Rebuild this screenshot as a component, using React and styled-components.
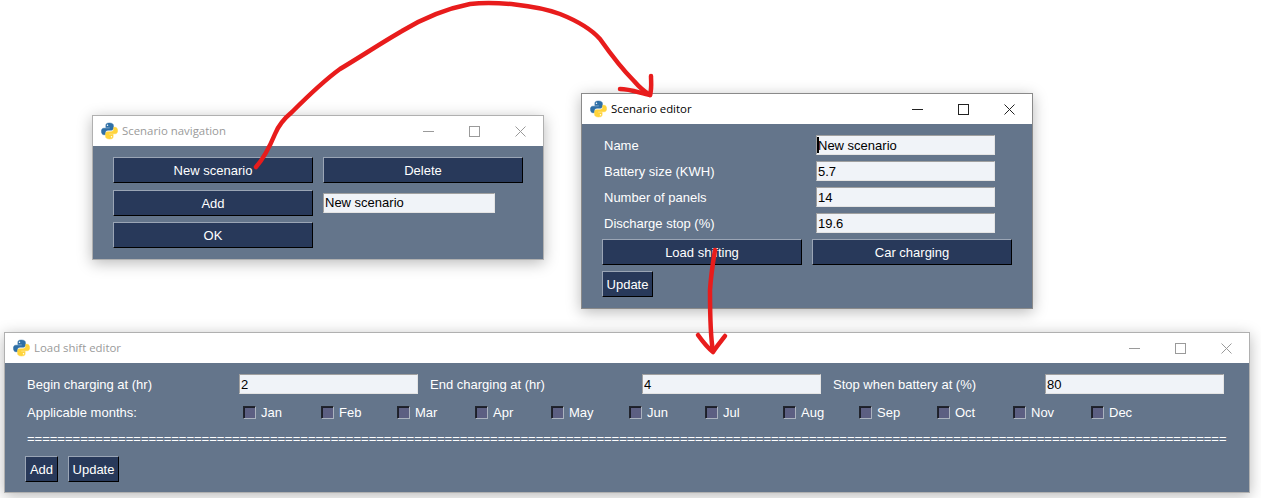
import React from "react"
import styled, { createGlobalStyle } from "styled-components"

const months = ["Jan", "Feb", "Mar", "Apr", "May", "Jun", "Jul", "Aug", "Sep", "Oct", "Nov", "Dec"]

const GlobalStyle = createGlobalStyle`
    html, body {
        margin: 0;
        padding: 0;
        background: #ffffff;
        overflow: hidden;
    }
`

const Desktop = styled.div`
    position: relative;
    width: 1261px;
    height: 498px;
    background: #ffffff;
    font-family: "Liberation Sans", Arial, sans-serif;
    font-size: 13px;
    color: #ffffff;
`

const Window = styled.div`
    position: absolute;
    left: ${(p) => p.$x}px;
    top: ${(p) => p.$y}px;
    width: ${(p) => p.$w}px;
    height: ${(p) => p.$h}px;
    box-sizing: border-box;
    display: flex;
    flex-direction: column;
    border: 1px solid ${(p) => (p.$active ? "#8a8a8a" : "#b0b0b0")};
    background: #64758b;
    box-shadow: 0 3px 14px rgba(0, 0, 0, 0.28);
`

const TitleBar = styled.div`
    height: 30px;
    flex: none;
    display: flex;
    align-items: center;
    background: #ffffff;
    padding-left: 8px;
`

const Title = styled.span`
    margin: -2px 0 0 4px;
    font-family: "Open Sans", "Noto Sans", sans-serif;
    font-size: 11.4px;
    color: ${(p) => (p.$active ? "#000000" : "#9a9a9a")};
`

const Controls = styled.div`
    margin-left: auto;
    display: flex;
    color: ${(p) => (p.$active ? "#222222" : "#9a9a9a")};
`

const ControlButton = styled.div`
    width: 46px;
    height: 30px;
    display: flex;
    align-items: center;
    justify-content: center;
`

const Body = styled.div`
    flex: 1;
    display: flex;
    flex-direction: column;
`

const NavGrid = styled.div`
    display: grid;
    grid-template-columns: 200px 200px;
    grid-auto-rows: 26px;
    column-gap: 10px;
    row-gap: 6px;
    padding: 11px 0 0 20px;
    & > :nth-child(n + 3) {
        margin-top: 1px;
    }
`

const Button = styled.button`
    box-sizing: border-box;
    height: 26px;
    width: ${(p) => (p.$w ? `${p.$w}px` : "auto")};
    padding: 0;
    background: #28395a;
    color: #ffffff;
    font-family: inherit;
    font-size: 13px;
    border-style: solid;
    border-width: 1px;
    border-color: #9aa5b5 #000000 #000000 #9aa5b5;
`

const Field = styled.input`
    box-sizing: border-box;
    width: ${(p) => p.$w}px;
    height: 20px;
    padding: 0 0 0 1px;
    background: #f0f3f8;
    color: #000000;
    font-family: inherit;
    font-size: 13px;
    border-style: solid;
    border-width: 1px;
    border-color: #a0a0a0 #e4e4e4 #e4e4e4 #a0a0a0;
    outline: none;
`

const FieldCell = styled.div`
    display: flex;
    align-items: center;
`

const CaretWrap = styled.div`
    position: relative;
    display: flex;
`

const Caret = styled.span`
    position: absolute;
    left: 1px;
    top: 2px;
    width: 2px;
    height: 16px;
    background: #000000;
`

const EditorForm = styled.div`
    display: grid;
    grid-template-columns: 212px 179px;
    grid-auto-rows: 20px;
    row-gap: 6px;
    padding: 11px 0 0 22px;
`

const Label = styled.span`
    line-height: 21px;
    white-space: nowrap;
`

const EditorButtons = styled.div`
    display: grid;
    grid-template-columns: 200px 200px;
    column-gap: 10px;
    padding: 6px 0 0 20px;
`

const UpdateRow = styled.div`
    display: flex;
    gap: 10px;
    padding: 6px 0 0 ${(p) => p.$left}px;
`

const ShiftRow = styled.div`
    display: flex;
    box-sizing: border-box;
    height: 31px;
    padding: 11px 0 0 22px;
`

const ShiftCell = styled.div`
    display: flex;
    width: ${(p) => p.$w}px;
    flex: none;
`

const ShiftLabel = styled(Label)`
    width: ${(p) => p.$w}px;
    flex: none;
`

const MonthRow = styled.div`
    display: flex;
    align-items: center;
    height: 20px;
    padding: 8px 0 0 22px;
`

const MonthsLabel = styled(Label)`
    width: 216px;
    flex: none;
`

const Month = styled.label`
    display: flex;
    align-items: center;
    gap: 5px;
    width: ${(p) => (p.$odd ? 76 : 78)}px;
    flex: none;
`

const Check = styled.span`
    box-sizing: border-box;
    width: 13px;
    height: 13px;
    background: #5c5f82;
    border-style: solid;
    border-width: 1px;
    border-color: #22252e #aab2be #aab2be #22252e;
    box-shadow: inset 1px 1px 0 #1c1f2a;
`

const Separator = styled.div`
    width: 1201px;
    margin: 9px 0 0 22px;
    height: 16px;
    line-height: 16px;
    overflow: hidden;
    white-space: nowrap;
`

const ShiftButtons = styled(UpdateRow)`
    padding-top: 9px;
`

const Overlay = styled.svg`
    position: absolute;
    left: 0;
    top: 0;
    pointer-events: none;
`

const PythonIcon = () => (
    <svg width="17" height="18" viewBox="0 0 16 16">
        <path d="M8 .5C5 .5 4.6 1.6 4.6 3v1.8h3.6v.6H2.7C1.2 5.4.4 6.6.4 8.3c0 1.8.8 3.2 2.3 3.2h1.4V9.6c0-1.4 1.2-2.4 2.5-2.4h3.2c1.1 0 1.9-.9 1.9-2V3C11.7 1.4 10.4.5 8 .5z" fill="#2f6fa6" stroke="#2f6fa6" strokeWidth=".5" />
        <path d="M8 15.5c3 0 3.4-1.1 3.4-2.5v-1.8H7.8v-.6h5.5c1.5 0 2.3-1.2 2.3-2.9 0-1.8-.8-3.2-2.3-3.2h-1.4v1.9c0 1.4-1.2 2.4-2.5 2.4H6.2c-1.1 0-1.9.9-1.9 2V13c0 1.6 1.3 2.5 3.7 2.5z" fill="#ffd43b" stroke="#ffd43b" strokeWidth=".5" />
        <circle cx="6.1" cy="2.5" r=".7" fill="#ffffff" />
        <circle cx="9.9" cy="13.5" r=".7" fill="#ffffff" />
    </svg>
)

const WindowTitle = ({ title, active }) => (
    <TitleBar>
        <PythonIcon />
        <Title $active={active}>{title}</Title>
        <Controls $active={active}>
            <ControlButton>
                <svg width="11" height="11" viewBox="0 0 11 11">
                    <path d="M0 5.5h11" stroke="currentColor" fill="none" />
                </svg>
            </ControlButton>
            <ControlButton>
                <svg width="11" height="11" viewBox="0 0 11 11">
                    <rect x=".5" y=".5" width="10" height="10" stroke="currentColor" fill="none" />
                </svg>
            </ControlButton>
            <ControlButton>
                <svg width="11" height="11" viewBox="0 0 11 11">
                    <path d="M.5.5l10 10M10.5.5l-10 10" stroke="currentColor" fill="none" />
                </svg>
            </ControlButton>
        </Controls>
    </TitleBar>
)

const editorFields = [
    ["Name", "New scenario"],
    ["Battery size (KWH)", "5.7"],
    ["Number of panels", "14"],
    ["Discharge stop (%)", "19.6"],
]

export default function App() {
    return (
        <Desktop>
            <GlobalStyle />

            <Window $x={92} $y={115} $w={452} $h={145}>
                <WindowTitle title="Scenario navigation" />
                <Body>
                    <NavGrid>
                        <Button>New scenario</Button>
                        <Button>Delete</Button>
                        <Button>Add</Button>
                        <FieldCell>
                            <Field $w={172} defaultValue="New scenario" />
                        </FieldCell>
                        <Button>OK</Button>
                    </NavGrid>
                </Body>
            </Window>

            <Window $x={581} $y={93} $w={452} $h={216} $active>
                <WindowTitle title="Scenario editor" active />
                <Body>
                    <EditorForm>
                        {editorFields.map(([label, value], i) => (
                            <React.Fragment key={label}>
                                <Label>{label}</Label>
                                <CaretWrap>
                                    <Field $w={179} defaultValue={value} />
                                    {i === 0 && <Caret />}
                                </CaretWrap>
                            </React.Fragment>
                        ))}
                    </EditorForm>
                    <EditorButtons>
                        <Button>Load shifting</Button>
                        <Button>Car charging</Button>
                    </EditorButtons>
                    <UpdateRow $left={20}>
                        <Button $w={51}>Update</Button>
                    </UpdateRow>
                </Body>
            </Window>

            <Window $x={4} $y={332} $w={1246} $h={161}>
                <WindowTitle title="Load shift editor" />
                <Body>
                    <ShiftRow>
                        <ShiftLabel $w={212}>Begin charging at (hr)</ShiftLabel>
                        <ShiftCell $w={191}>
                            <Field $w={179} defaultValue="2" />
                        </ShiftCell>
                        <ShiftLabel $w={212}>End charging at (hr)</ShiftLabel>
                        <ShiftCell $w={191}>
                            <Field $w={179} defaultValue="4" />
                        </ShiftCell>
                        <ShiftLabel $w={212}>Stop when battery at (%)</ShiftLabel>
                        <ShiftCell $w={179}>
                            <Field $w={179} defaultValue="80" />
                        </ShiftCell>
                    </ShiftRow>
                    <MonthRow>
                        <MonthsLabel>Applicable months:</MonthsLabel>
                        {months.map((m, i) => (
                            <Month key={m} $odd={i % 2 === 1}>
                                <Check />
                                {m}
                            </Month>
                        ))}
                    </MonthRow>
                    <Separator>{"=".repeat(158)}</Separator>
                    <ShiftButtons $left={20}>
                        <Button $w={33}>Add</Button>
                        <Button $w={51}>Update</Button>
                    </ShiftButtons>
                </Body>
            </Window>

            <Overlay width="1261" height="498" viewBox="0 0 1261 498" fill="none" stroke="#e81c1c" strokeWidth="4.5" strokeLinecap="round" strokeLinejoin="round">
                <path d="M256 167C264 158 270 146 275 134C279 124 286 117 292 112C303 101 322 82 340 69C360 57 383 42 402 31C420 20 445 9 470 4C495 1 535 5 560 14C580 22 592 30 600 39C612 56 625 72 634 81C640 88 645 92 650 95" />
                <path d="M620 89C630 89 640 93 650 95C652 88 651 82 651 76" />
                <path d="M715 250C713 262 711 275 710 290C710 310 710 335 713 351" />
                <path d="M698 335C703 342 708 348 713 352C717 346 722 340 725 336" />
            </Overlay>
        </Desktop>
    )
}
